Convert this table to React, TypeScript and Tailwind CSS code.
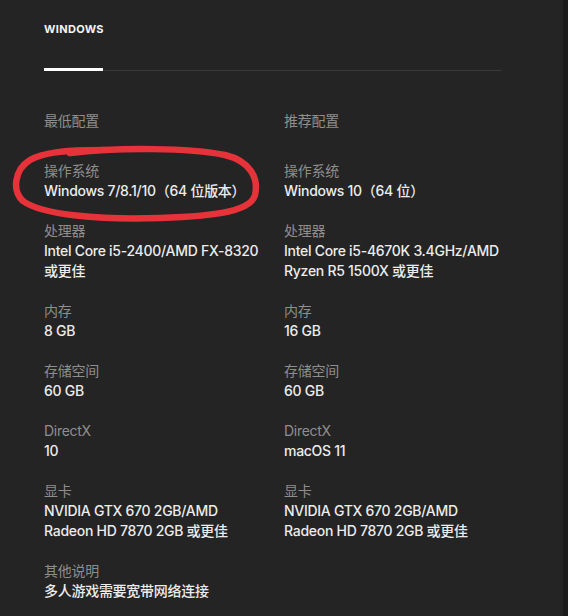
const specs = [
  {
    label: "操作系统",
    min: ["Windows 7/8.1/10（64 位版本）"],
    rec: ["Windows 10（64 位）"],
  },
  {
    label: "处理器",
    min: ["Intel Core i5-2400/AMD FX-8320", "或更佳"],
    rec: ["Intel Core i5-4670K 3.4GHz/AMD", "Ryzen R5 1500X 或更佳"],
  },
  { label: "内存", min: ["8 GB"], rec: ["16 GB"] },
  { label: "存储空间", min: ["60 GB"], rec: ["60 GB"] },
  { label: "DirectX", min: ["10"], rec: ["macOS 11"] },
  {
    label: "显卡",
    min: ["NVIDIA GTX 670 2GB/AMD", "Radeon HD 7870 2GB 或更佳"],
    rec: ["NVIDIA GTX 670 2GB/AMD", "Radeon HD 7870 2GB 或更佳"],
  },
];

function Spec({ label, lines }: { label: string; lines: string[] }) {
  return (
    <div className="flex flex-col">
      <span className="text-[#8e8e8e]">{label}</span>
      {lines.map((l) => (
        <span key={l} className="font-medium text-[#ececec]">
          {l}
        </span>
      ))}
    </div>
  );
}

export default function App() {
  return (
    <div
      className="relative flex h-[616px] w-[568px] overflow-hidden"
      style={{ fontFamily: 'Inter, "Noto Sans CJK SC", sans-serif' }}
    >
      <div className="flex-1 bg-[#242424] px-[44px] pt-[21px] text-[14px] leading-[20px] tracking-[-0.02em]">
        {/* Platform tab */}
        <div className="w-[458px] border-b border-[#3a3a3a]">
          <div className="text-[11px] font-bold uppercase leading-[16px] tracking-[0.03em] text-[#f4f4f4]">
            Windows
          </div>
          <div className="mt-[31px] -mb-px h-[3px] w-[59px] bg-white" />
        </div>

        <div className="mt-[40px] grid grid-cols-[240px_1fr] gap-y-5">
          <span className="text-[#8e8e8e]">最低配置</span>
          <span className="text-[#8e8e8e]">推荐配置</span>
          {specs.map((s, i) => (
            <div key={s.label} className="contents">
              <div className={i === 0 ? "mt-[10px]" : ""}>
                <Spec label={s.label} lines={s.min} />
              </div>
              <div className={i === 0 ? "mt-[10px]" : ""}>
                <Spec label={s.label} lines={s.rec} />
              </div>
            </div>
          ))}
          <Spec label="其他说明" lines={["多人游戏需要宽带网络连接"]} />
        </div>
      </div>
      <div className="w-[5px] bg-[#1b1b1b]" />

      {/* red hand-drawn annotation */}
      <svg
        className="pointer-events-none absolute left-0 top-0"
        width="568"
        height="616"
        viewBox="0 0 568 616"
      >
        <path
          d="M 70 153 C 120 147, 190 148, 225 155 C 250 161, 259 178, 255 195 C 251 210, 222 216, 160 218 C 100 220, 42 215, 23 201 C 12 191, 14 170, 30 160 C 42 153, 62 150, 104 150"
          fill="none"
          stroke="#e6333a"
          strokeWidth="6.5"
          strokeLinecap="round"
          strokeLinejoin="round"
        />
      </svg>
    </div>
  );
}
